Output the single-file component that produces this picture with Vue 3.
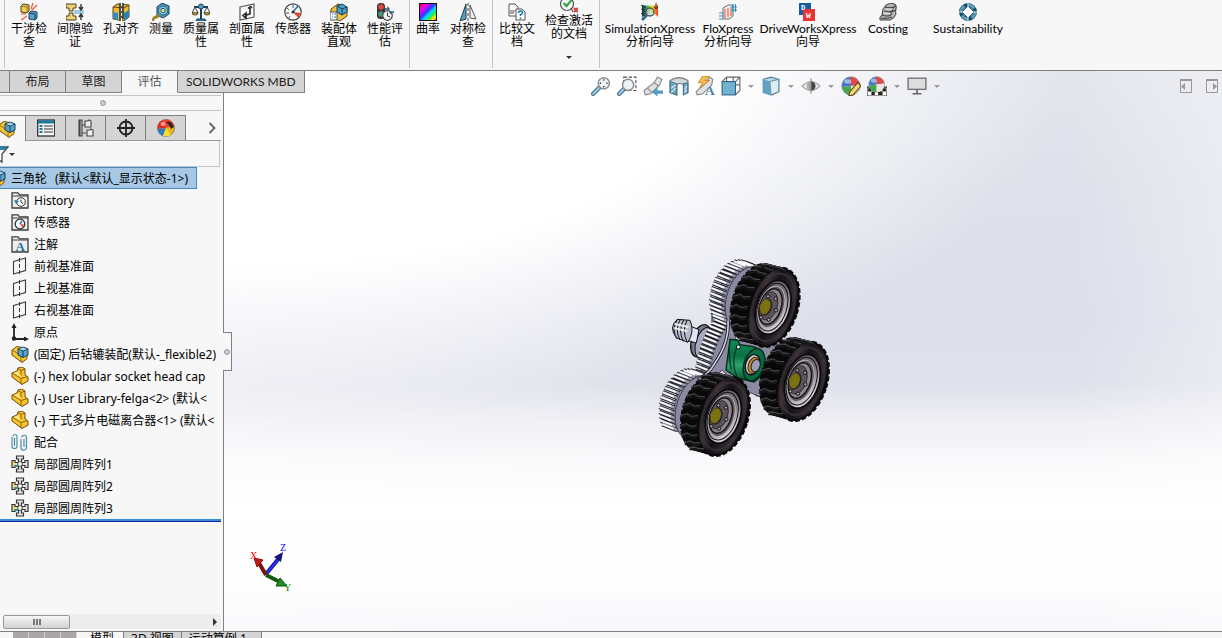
<script setup>
import { ref } from 'vue'

const folder = '<path d="M1 4V1.800h6l1.500 2H17V17H1z" fill="#eee" stroke="#3c3c3c" stroke-width="1.300"/><path d="M1 5h16" stroke="#3c3c3c"/>'
const part = '<path d="M1 6l5-2 1-3 4-1 3 2v6l3 2v4l-6 3.500L1 10z" fill="#fbc52c" stroke="#6b4b0c" stroke-width="1"/><path d="M1 6l9 5.500v5.500M10 11.500l7-2M7 1.500l3 2v5M10 3.500l4-1.500" fill="none" stroke="#7d5a10" stroke-width=".9"/><path d="M2.500 6l4.500-1.500 2.500 4L10 10z" fill="#ffe680"/>'
const assembly = '<path d="M1 5l5-3.500 10 2v10l-5 4L1 10z" fill="#fbc52c" stroke="#6b4b0c"/><path d="M2 5.500l8 5v6" fill="none" stroke="#8d6a18"/><path d="M7 4l5-2 5 2v6l-5 2.500L7 10z" fill="#5aa2cc" stroke="#173f59"/><path d="M7 4l5 2 5-2M12 6v6" fill="none" stroke="#173f59"/><path d="M8 4l4-1.500 4 1.500-4 1.500z" fill="#a8d5ec"/>'
const plane = '<path d="M2.500 4.500L14.500 1v12.500L2.500 17z" fill="none" stroke="#3c3c3c" stroke-width="1.100"/><path d="M8.500 1v16" stroke="#3c3c3c" stroke-dasharray="4 2"/>'
const pattern = '<g fill="#e4e4e4" stroke="#333" stroke-width="1.200"><path d="M5.500 1h7v3h-2v3h-3V4h-2zM5.500 17h7v-3h-2v-3h-3v3h-2zM17 5.500v7h-3v-2h-3v-3h3v-2z"/><path d="M1 5.500v7h3v-2h3v-3H4v-2z" fill="#f6dc7a"/></g><path d="M7.500 7.500h3v3h-3z" fill="#fff"/><path d="M3 10h4v2H4z" fill="#1c93bd"/>'
const ball = '<circle cx="9" cy="9" r="8.200" fill="#eee" stroke="#555" stroke-width=".6"/><path d="M9 9L8 1A8 8 0 0 0 1 10z" fill="#3f74cf"/><path d="M9 9L8 1a8 8 0 0 1 9 7z" fill="#dc4a4c"/><path d="M9 9l-8 1a8 8 0 0 0 8 7z" fill="#45a94b"/><path d="M9 9l8-1a8 8 0 0 1-8 9z" fill="#ece8dc"/><ellipse cx="6" cy="5" rx="3" ry="2" fill="#fff" opacity=".5"/>'
const lens = (x, y) => `<path d="M${x - 4} ${y + 4}L2 16" stroke="#46788f" stroke-width="4" stroke-linecap="round"/><path d="M${x - 4} ${y + 4}L2 16" stroke="#9cc8dd" stroke-width="2" stroke-linecap="round"/><circle cx="${x}" cy="${y}" r="5" fill="#edf2f4" stroke="#8a8f92" stroke-width="1.300"/>`

const icons = {
  interference: '<path d="M1 3l2-2 6 1v6l-2 2-6-1z" fill="#f3cf55" stroke="#473a13"/><path d="M1 3l6 1v6M7 4l2-2" fill="none" stroke="#8c722a"/><path d="M9 10l2-2 6 1v6l-2 2-6-1z" fill="#55a3c8" stroke="#173f59"/><path d="M9 10l6 1v6" fill="none" stroke="#173f59"/><path d="M11 6l2-6M12 7l5-5M1 11h5M1 17l6-4" stroke="#f05235" stroke-width="1.200"/>',
  clearance: '<path d="M0 1h10v4H7v3H3V5H0zM3 10h4v3h3v4H0v-4h3z" fill="#f0d273" stroke="#4b411f"/><path d="M8 8h10M8 10h10" stroke="#47a0bf"/><path d="M15 1v6M15 11v6M13 4l2 3 2-3M13 14l2-3 2 3" fill="none" stroke="#333" stroke-width="1.400"/>',
  hole: '<path d="M1 4l4-3 12 1v12l-5 4-11-2z" fill="#eebc32" stroke="#60440e"/><path d="M1 9l5 1v7l-5-1z" fill="#328eb9"/><path d="M12 10l5-3v7l-5 4z" fill="#2882ad"/><path d="M7 0h5v16l-5 2z" fill="#4d504d"/><path d="M9.500 0v18" stroke="#fff" stroke-dasharray="3 2"/><path d="M1 4l11 1 5-3" fill="none" stroke="#5c430e"/>',
  measure: '<path d="M5 4l5-4 7 3v8l-6 4-6-3z" fill="#4a9cc6" stroke="#173f59"/><circle cx="11" cy="7.500" r="4.500" fill="#8bc8e2" stroke="#25607f"/><circle cx="11" cy="7.500" r="2.200" fill="#eed96e" stroke="#25607f"/><path d="M7 13l-6 3v2M1 15l6-3" fill="none" stroke="#9e811e" stroke-width="2"/>',
  mass: '<path d="M9 1v15M2 4h14" stroke="#15405a" stroke-width="2"/><circle cx="9" cy="3.500" r="2.500" fill="#4fa3c8" stroke="#15405a"/><path d="M5 16h8l1 2H4z" fill="#3d89ac" stroke="#15405a"/><path d="M3 4L0 10h6zM15 4l-3 6h6z" fill="none" stroke="#3f4347"/><path d="M0 10h6a3 2 0 0 1-6 0zM12 10h6a3 2 0 0 1-6 0z" fill="#f2cf53" stroke="#5d4813"/>',
  section: '<path d="M2 4l14-3v13L2 17z" fill="#fafafa" stroke="#555" stroke-width="1.200"/><path d="M12 5v6l-5 1.500M10 5.500l2.500-2 1.500 1.500M8 10l-3 2.500L8 15z" fill="none" stroke="#222" stroke-width="1.600"/>',
  sensor: '<circle cx="9" cy="9" r="8.200" fill="#f7f7f7" stroke="#454545" stroke-width="1.200"/><path d="M9 9l5-6" stroke="#1b7fa6" stroke-width="1.600"/><path d="M9 9l7.500 1-2 5z" fill="#e4432d"/><path d="M9 2v3M3 5l2 2M2 10h3M5 15l1-2" stroke="#555"/><circle cx="9" cy="9" r="1.500" fill="#333"/>',
  visual: '<path d="M1 6l7-5 9 3v9l-7 5-9-4z" fill="#eabf3d" stroke="#614910"/><path d="M7 3l5-2 5 3v5l-5 3-5-3z" fill="#4e9dc4" stroke="#173f59"/><path d="M7 3l5 3 5-2M12 6v6" fill="none" stroke="#173f59"/><path d="M0 9h7v8H0z" fill="#f9f9f9" stroke="#555"/><path d="M2 11h1M4 11h2M2 14h1M4 14h2" stroke="#247caa"/>',
  performance: '<rect x="1" y="0" width="8" height="16" rx="3.500" fill="#373737"/><circle cx="5" cy="4" r="2.700" fill="#e94242"/><circle cx="5" cy="11" r="2.700" fill="#497"/><circle cx="11.500" cy="12.500" r="4.800" fill="#f2f2f2" stroke="#444" stroke-width="1.200"/><path d="M11.500 9.500v3.500l2.500 1" stroke="#333" fill="none"/><path d="M9 6h4l-1.500-2M18 9h-4l1.500 2" fill="none" stroke="#205f80" stroke-width="1.300"/>',
  curvature: '<rect width="18" height="18" fill="#111"/><rect x="1" y="1" width="16" height="16" fill="url(#rainbow)"/>',
  symmetry: '<path d="M7 1v15l-6 2z" fill="#589fc0" stroke="#223f4d"/><path d="M11 2v13l6 1z" fill="#eee" stroke="#555"/><path d="M9 0v18" stroke="#444" stroke-dasharray="3 2"/>',
  compare: '<path d="M1 1h6l3 3v9H1z" fill="#fafafa" stroke="#555"/><path d="M8 6h6l3 3v8H8z" fill="#fff" stroke="#555"/><path d="M2 8h5M2 10h4" stroke="#555"/><path d="M10.500 10q0-2 2-2t2 1.800q0 1.200-2 2v1.200M12.500 14.500v1.500" fill="none" stroke="#187aaa" stroke-width="1.600"/>',
  check: '<circle cx="7" cy="9" r="6.500" fill="#f7f7f7" stroke="#555" stroke-width="1.200"/><path d="M3.500 8l3 3 5-6" fill="none" stroke="#34a447" stroke-width="2.200"/><path d="M14 13l4 4M18 13l-4 4" fill="none" stroke="#db352d" stroke-width="1.800"/><path d="M11 13l2 4M13 3l4-2v4" stroke="#333" fill="none"/>',
  simulation: '<path d="M1 2q8 1 16 0v12q-4-5-8-4L1 14z" fill="url(#heat)"/><path d="M0 2l5 3M0 6l5 3M0 10l4 3M15 0v6M13 4l2 2 2-2" fill="none" stroke="#333"/><path d="M6 12l-5 5" stroke="#266a91" stroke-width="2.600"/><circle cx="9" cy="9" r="4" fill="#c5d8d6" fill-opacity=".7" stroke="#555" stroke-width="1.400"/>',
  flow: '<path d="M4 5l5-3h5v11l-4 3H4z" fill="#eee" stroke="#6b6b6b"/><path d="M6 6v9M9 5v9M12 4v9" stroke="#f47469" stroke-width="1.400"/><path d="M12 4h6M12 7h6M0 10h4M0 13h5M0 16h4M14 1v8M16.500 1v8" stroke="#2496c5" stroke-width="1.100"/>',
  driveworks: '<rect x="0" y="0" width="12" height="12" fill="#155ba5"/><rect x="4" y="6" width="12" height="12" fill="#ea3434"/><text x="2" y="7" font-family="Liberation Mono" font-size="7" font-weight="700" fill="#fff">D</text><text x="7" y="15" font-family="Liberation Mono" font-size="8" font-weight="700" fill="#fff">W</text>',
  costing: '<path d="M1 17q-1-3 2-5 0-7 4-10 4-3 9-1 2 2 1 5t0 5q-2 5-6 6z" fill="#b5b5b5" stroke="#444"/><path d="M3 12q5 2 9 0M5 8q6 2 12-1M6 4q6 2 11-1M2 15q5 1 11-1M12 12q1-7 4-9" fill="none" stroke="#444" stroke-width="1.200"/><path d="M5 10l6 .500M7 6h7" stroke="#eee"/>',
  sustain: '<circle cx="9" cy="9" r="7" fill="none" stroke="#154d68" stroke-width="4"/><circle cx="9" cy="9" r="7" fill="none" stroke="#5ba1bd" stroke-width="2.500" stroke-dasharray="7 4"/><path d="M9 3l6 6-6 6-6-6z" fill="#f7f7f7" stroke="#205d79"/><path d="M0 9h4M14 9h4M9 0v4M9 14v4" stroke="#e8eef1"/>',
  part, assembly, plane, pattern,
  history: folder + '<circle cx="10" cy="11" r="4.300" fill="#fff" stroke="#333"/><path d="M10 8.500v2.500l2 1.500" fill="none" stroke="#333"/><path d="M3 9l2 4 3-3" fill="#267a9f"/>',
  sensors: folder + '<circle cx="9" cy="11" r="4.800" fill="#fff" stroke="#333" stroke-width="1.300"/><path d="M9 11l2-3" stroke="#1978a1" stroke-width="1.500"/><path d="M9 11l4 .5-1.500 3z" fill="#e7442e"/>',
  notes: folder + '<text x="4.500" y="16" font-family="Liberation Serif" font-size="13" font-weight="700" fill="#24729a">A</text>',
  origin: '<path d="M3 4v12h11" fill="none" stroke="#222" stroke-width="1.800"/><path d="M3 0L.5 5h5zM18 16l-5-2.500v5z" fill="#222"/><circle cx="3" cy="15.500" r="2.200" fill="#222"/>',
  mates: '<g fill="none" stroke="#4b8cad" stroke-width="1.200"><path d="M1 4v9a2.500 2.500 0 0 0 5 0V3.500a2 2 0 0 0-4 0M3.500 5v8M10 6v8.500a2.500 2.500 0 0 0 5.500 0V4.500a2 2 0 0 0-4.500 0M13 6v8"/></g>',
  props: '<rect x=".7" y="1" width="17" height="16" fill="#f7f7f7" stroke="#333" stroke-width="1.300"/><path d="M1 3h16" stroke="#1b799d" stroke-width="3"/><path d="M2.500 7h3M2.500 10h3M2.500 13h3" stroke="#1b799d" stroke-width="2"/><path d="M7 7h9M7 10h9M7 13h9" stroke="#333"/>',
  config: '<path d="M3 1v16M2 1h3v16H2zM5 6h4M5 14h4" fill="none" stroke="#444" stroke-width="1.100"/><path d="M8 2h3l1-1 2 1v6H8zM10 11h3l1-1 2 1v6h-6z" fill="#eee" stroke="#444" stroke-width="1.100"/>',
  target: '<circle cx="9" cy="9" r="6.500" fill="none" stroke="#222" stroke-width="1.800"/><path d="M9 0v18M0 9h18" stroke="#222" stroke-width="1.800"/>',
  appearance: '<circle cx="9" cy="9" r="8.500" fill="#f2b21c" stroke="#555" stroke-width=".6"/><path d="M9 9L6 1A8.500 8.500 0 0 0 .7 10z" fill="#d93025"/><path d="M9 9L6 1q7-2 11 5z" fill="#e8403a"/><path d="M9 3q5-2 8 5l-3 2q-2-5-5-7z" fill="#3a2020"/><path d="M9 9L.7 10Q1 15 6 17z" fill="#2e79c8"/><path d="M9 9l-3 8q5 1 8-1z" fill="#f3de2d"/><ellipse cx="6" cy="5" rx="2.500" ry="2" fill="#fff" opacity=".5"/>',
  filter: '<path d="M0 2h17l-6 7v8l-3-2V9z" fill="#fff" stroke="#444" stroke-width="1.300"/><path d="M1 1.500h15L14 5H4z" fill="#2a7fa3"/>',
  zoomFit: lens(11.500, 6.500) + '<path d="M11.500 2.500l1 1.500h-2zM11.500 10.500l1-1.500h-2zM7.500 6.500L9 5.500v2zM15.500 6.500L14 5.500v2z" fill="#333"/>',
  zoomArea: '<rect x="6" y="1" width="11" height="12" fill="none" stroke="#555" stroke-dasharray="3 1.500"/>' + lens(10, 8),
  previous: '<path d="M1 13l9-7 3-5 4 2-2 5-8 8-5 1z" fill="#e0e1e2" stroke="#888"/><path d="M4 11l4 4M10 6l4 3" stroke="#888"/><path d="M18 13h-5v-3l-5 4.500 5 4V16h5z" fill="#4f9bc2"/>',
  cut: '<path d="M1 4q8-5 16 0v11l-4 1V8q-3-3-6 0v9l-6-2z" fill="#d5d8d9" stroke="#777"/><path d="M1 5l6 2v10l-6-2zM13 7l4-1v9l-4 2z" fill="#68a6c3" stroke="#46788f"/><path d="M2 11l4-3M2 15l4-4M14 12l2-3M14 15l2-3" stroke="#eef"/>',
  annotView: '<path d="M1 14l9-8 3-5 3 2-1 5-8 8-5 1z" fill="#e0e1e2" stroke="#888"/><path d="M7 0h6L9 4h4L4 11l3-5H3z" fill="#fbbd4e" stroke="#b87918" stroke-width=".7"/><text x="9" y="17" font-family="Liberation Serif" font-size="12" font-weight="700" fill="#3d7fa5">A</text>',
  orient: '<path d="M5 1h12v12l-4 4M5 1v4M17 1l-4 4M5 1L1 5M11 1v4M13 8h4" fill="none" stroke="#666"/><rect x="1" y="5" width="12" height="12" fill="#73b2d3" stroke="#2e6685"/>',
  display: '<path d="M2 3l7-2 7 2v11l-6 3-8-2z" fill="#b7dced" stroke="#55808f"/><path d="M2 3l6 2v12l-6-2z" fill="#5fa3c5"/><path d="M8 5l8-2v11l-7 3z" fill="#ddeef4" stroke="#6a93a5"/>',
  eye: '<path d="M1 9q8-8 16 0-8 8-16 0z" fill="#ececec" stroke="#aaa"/><circle cx="9" cy="9" r="4" fill="#aaa"/><path d="M9 5a4 4 0 0 1 0 8z" fill="#444"/><path d="M9 2v14" stroke="#888"/>',
  editLook: ball + '<path d="M8 14l7-8 3 3-7 8-4 1z" fill="#f4d774" stroke="#5c4a1a"/>',
  scene: '<path d="M0 10h18v8H0z" fill="#fff" stroke="#333"/><path d="M1 11h3v3H1zM14 11h3v3h-3zM4 14h3v3H4zM10 14h4v3h-4z" fill="#222"/><g transform="translate(1 0) scale(.85)">' + ball + '</g>',
  screen: '<rect x="1" y="2" width="16" height="10" fill="#ddd" stroke="#777" stroke-width="1.300"/><path d="M9 12v4M5 16h8" stroke="#666" stroke-width="1.500"/>'
}

const ribbon = [
  [
    ['interference', '干涉检查', 'w46'], ['clearance', '间隙验证', 'w46'], ['hole', '孔对齐', 'w46'], ['measure', '测量', 'w34'],
    ['mass', '质量属性', 'w46'], ['section', '剖面属性', 'w46'], ['sensor', '传感器', 'w46'], ['visual', '装配体直观', 'w46'], ['performance', '性能评估', 'w46']
  ],
  [['curvature', '曲率', 'w34'], ['symmetry', '对称检查', 'w46']],
  [['compare', '比较文档', 'w46'], ['check', '检查激活的文档', 'w58 raised']],
  [
    ['simulation', 'SimulationXpress 分析向导', 'w98'], ['flow', 'FloXpress 分析向导', 'w58'], ['driveworks', 'DriveWorksXpress 向导', 'w102'],
    ['costing', 'Costing', 'w58'], ['sustain', 'Sustainability', 'w102']
  ]
]
const tabs = ['布局', '草图', '评估', 'SOLIDWORKS MBD']
const activeTab = ref('评估')
const panelTabs = [['props', '属性'], ['config', '配置'], ['target', '尺寸'], ['appearance', '外观']]
const tree = [
  ['history', 'History'], ['sensors', '传感器'], ['notes', '注解'], ['plane', '前视基准面'], ['plane', '上视基准面'], ['plane', '右视基准面'],
  ['origin', '原点'], ['assembly', '(固定) 后轱辘装配(默认-_flexible2)'], ['part', '(-) hex lobular socket head cap'],
  ['part', '(-) User Library-felga<2> (默认<'], ['part', '(-) 干式多片电磁离合器<1> (默认<'], ['mates', '配合'],
  ['pattern', '局部圆周阵列1'], ['pattern', '局部圆周阵列2'], ['pattern', '局部圆周阵列3']
]
const hud = [['zoomFit'], ['zoomArea'], ['previous'], ['cut'], ['annotView'], ['orient', 1], ['display', 1], ['eye', 1], ['editLook'], ['scene', 1], ['screen', 1]]
const sheets = ['模型', '3D 视图', '运动算例 1']

const TILT = Math.PI / 10
function rim(a, rx, ry, dx, dy) {
  const x = rx * Math.cos(a)
  const y = ry * Math.sin(a)
  return [dx + x * Math.cos(TILT) - y * Math.sin(TILT), dy + x * Math.sin(TILT) + y * Math.cos(TILT)].map(v => Math.round(v))
}

// tyre lugs, relative to the centre of the wheel's front face
let lugs = ''
for (let i = 0; i < 12; i++) {
  const a = Math.PI * (0.56 + i * 0.085)
  lugs += `M${rim(a, 71, 120, -54, -15)}L${rim(a + 0.1, 72, 120, -34, -11)}L${rim(a + 0.06, 72, 119, -20, -7)}L${rim(a + 0.12, 70, 116, -4, -2)}`
}
const bolts = Array.from({ length: 6 }, (_, i) => rim(i * Math.PI / 3, 24, 38, -14, 2))
const wheels = [[369, 172], [457, 394], [220, 499]]

// belt teeth: short bars running across the width of each pulley
function pulleyTeeth(cx, cy) {
  let d = ''
  for (let i = 0; i < 19; i++) {
    const a = Math.PI * (0.68 + i * 0.05)
    const [x, y] = rim(a, 63, 98, cx, cy)
    d += `M${x} ${y}l44 17`
  }
  return d
}
function saddleTeeth() {
  let d = ''
  for (let i = 0; i <= 12; i++) {
    const t = i / 12
    const x = Math.round((1 - t) * (1 - t) * 194 + 2 * t * (1 - t) * 148 + t * t * 136)
    const y = Math.round((1 - t) * (1 - t) * 208 + 2 * t * (1 - t) * 264 + t * t * 362)
    d += `M${x} ${y}l42 17`
  }
  return d
}
const teeth = [saddleTeeth(), pulleyTeeth(246, 128), pulleyTeeth(95, 455)]
</script>

<template>
  <div class="app">
    <header class="ribbon">
      <div v-for="(group, g) in ribbon" :key="g" class="group">
        <button v-for="item in group" :key="item[0]" :class="['tool', item[2]]" type="button">
          <svg viewBox="0 0 18 18" aria-hidden="true">
            <defs v-if="item[0] === 'curvature'">
              <linearGradient id="rainbow" x2="1" y2="1"><stop stop-color="#f02" /><stop offset=".25" stop-color="#e0f" /><stop offset=".45" stop-color="#33f" /><stop offset=".6" stop-color="#0df" /><stop offset=".74" stop-color="#2e4" /><stop offset=".87" stop-color="#fe0" /><stop offset="1" stop-color="#f62" /></linearGradient>
            </defs>
            <defs v-if="item[0] === 'simulation'">
              <linearGradient id="heat"><stop stop-color="#224" /><stop offset=".3" stop-color="#2a6" /><stop offset=".6" stop-color="#ee2" /><stop offset="1" stop-color="#f31" /></linearGradient>
            </defs>
            <g v-html="icons[item[0]]" />
          </svg>
          <span>{{ item[1] }}</span>
          <i v-if="item[0] === 'check'" class="caret dark" />
        </button>
      </div>
    </header>

    <main class="main">
      <nav class="tabs">
        <button type="button" class="tab stub" aria-label="装配体" />
        <button v-for="t in tabs" :key="t" type="button" :class="['tab', { on: activeTab === t }]" @click="activeTab = t">{{ t }}</button>
      </nav>

      <aside class="panel">
        <div class="grip"><i class="dot" /></div>
        <div class="panel-tabs">
          <button type="button" class="ptab first" aria-label="特征树"><svg viewBox="0 0 18 18"><g v-html="icons.assembly" /></svg></button>
          <button v-for="p in panelTabs" :key="p[0]" type="button" class="ptab" :aria-label="p[1]"><svg viewBox="0 0 18 18"><g v-html="icons[p[0]]" /></svg></button>
          <button type="button" class="more" aria-label="更多"><svg viewBox="0 0 8 12"><path d="M1.500 1l5 5-5 5" fill="none" stroke="#666" stroke-width="1.800" /></svg></button>
        </div>
        <div class="filter">
          <button type="button" aria-label="过滤"><svg viewBox="0 0 18 18"><g v-html="icons.filter" /></svg><i class="caret dark" /></button>
        </div>
        <div class="root">
          <svg viewBox="0 0 18 18"><g v-html="icons.assembly" /></svg>
          <span>三角轮</span><span>(默认&lt;默认_显示状态-1&gt;)</span>
        </div>
        <ul class="tree">
          <li v-for="n in tree" :key="n[1]"><svg viewBox="0 0 18 18"><g v-html="icons[n[0]]" /></svg><span>{{ n[1] }}</span></li>
        </ul>
        <div class="scroll">
          <div class="thumb"><i /><i /><i /></div>
          <svg viewBox="0 0 4 8"><path d="M0 0l4 4-4 4z" fill="#333" /></svg>
        </div>
      </aside>

      <section class="view">
        <div class="handle"><i class="dot" /></div>
        <div class="hud">
          <template v-for="h in hud" :key="h[0]">
            <button type="button" :aria-label="h[0]"><svg viewBox="0 0 18 18"><g v-html="icons[h[0]]" /></svg></button>
            <i v-if="h[1]" class="caret" />
          </template>
        </div>
        <div class="corner">
          <svg viewBox="0 0 12 14"><path d="M.5 1h11v12.500H.5z" fill="none" stroke="#999" /><path d="M0 1h12" stroke="#999" stroke-width="2" /><path d="M5 4v7L1 7.500z" fill="#999" /></svg>
          <svg viewBox="0 0 12 14"><path d="M.5 1h11v12.500H.5z" fill="none" stroke="#999" /><path d="M0 1h12" stroke="#999" stroke-width="2" /><path d="M7 4v7l4-3.500z" fill="#999" /></svg>
        </div>

        <svg class="model" viewBox="0 0 570 645">
          <defs>
            <linearGradient id="rimFace" x1="0" y1="0" x2="1" y2="1"><stop stop-color="#5a545c" /><stop offset=".45" stop-color="#77727a" /><stop offset=".8" stop-color="#d8d2d6" /><stop offset="1" stop-color="#6a6368" /></linearGradient>
            <linearGradient id="wall" x1="0" y1="0" x2="1" y2="0"><stop stop-color="#0b090b" /><stop offset=".2" stop-color="#3b333a" /><stop offset=".45" stop-color="#151115" /><stop offset=".85" stop-color="#332c33" /><stop offset="1" stop-color="#080608" /></linearGradient>
            <linearGradient id="green" x1="0" y1="0" x2="0" y2="1"><stop stop-color="#0f8a55" /><stop offset=".4" stop-color="#0c7144" /><stop offset=".6" stop-color="#2aa56e" /><stop offset="1" stop-color="#064a2c" /></linearGradient>
          </defs>
          <path d="M285 400l40 38 25-10-20-50z" fill="#b9bad2" stroke="#111" stroke-width="4" />
          <path d="M290 408l30 26M350 290l40-24 20 12M360 276l30-10" stroke="#fff" stroke-width="7" />
          <path d="M290 412l30 26M355 294l40-24" stroke="#111" stroke-width="3" />

          <ellipse cx="152" cy="272" rx="27" ry="50" transform="rotate(18 152 272)" fill="#7b7b8e" stroke="#111" stroke-width="4" />
          <ellipse cx="162" cy="278" rx="24" ry="48" transform="rotate(18 162 278)" fill="#a9a9be" stroke="#111" stroke-width="3" />
          <path d="M105 222l42 17-8 40-42-12z" fill="#e2e3f5" stroke="#111" stroke-width="3" />
          <path d="M82 208l38 3q15 30-6 66l-34-13q-26-32 2-56z" fill="#b8b9ca" stroke="#111" stroke-width="3" />
          <path d="M82 208q-18 30-2 58M91 208q-18 30-1 62M101 210q-18 30-1 64M111 211q-16 30 0 65" fill="none" stroke="#17171c" stroke-width="3" />
          <path d="M74 222l42 9M72 234l40 10" stroke="#fff" stroke-width="6" opacity=".8" />

          <path d="M262 34Q300 30 325 52L250 210 258 270 350 285 395 268 420 290 330 440 280 420 215 360 120 480 84 546 62 530 80 430 150 370 190 220 200 120z" fill="#8b8aa3" stroke="#1b1b22" stroke-width="2" />
          <path d="M186 180v38l30 14 24-12-2-40z" fill="#a3a3ba" stroke="#17171c" stroke-width="3" />
          <g v-for="(d, i) in teeth" :key="i" fill="none">
            <path :d="d" stroke="#15151a" stroke-width="13" />
            <path :d="d" stroke="#9a9aac" stroke-width="8" />
            <path :d="d" :stroke-dasharray="i ? '36 14' : '38 10'" stroke="#fff" stroke-width="5" />
          </g>
          <ellipse cx="292" cy="146" rx="62" ry="100" transform="rotate(18 292 146)" fill="#8b8aa3" stroke="#26262e" stroke-width="2" />
          <ellipse cx="142" cy="473" rx="62" ry="100" transform="rotate(18 142 473)" fill="#8b8aa3" stroke="#26262e" stroke-width="2" />
          <path d="M234 212q4 66-40 128-16 30-50 50" fill="none" stroke="#17171c" stroke-width="10" />
          <path d="M234 212q4 66-40 128-16 30-50 50" fill="none" stroke="#d0d0e0" stroke-width="5" />

          <path d="M240 268l22 2 8 14 40 6q36 12 36 48t-34 58l-50-12-34-24z" fill="url(#green)" stroke="#022a18" stroke-width="4" />
          <path d="M240 268q-5 50 4 90M262 286q-22 50 0 98" fill="none" stroke="#033d24" stroke-width="4" />
          <ellipse cx="312" cy="344" rx="30" ry="50" transform="rotate(18 312 344)" fill="#0a6a41" stroke="#022a18" stroke-width="4" />
          <ellipse cx="308" cy="344" rx="21" ry="31" transform="rotate(18 308 344)" fill="#d8d8e0" stroke="#111" stroke-width="4" />
          <ellipse cx="311" cy="346" rx="16" ry="25" transform="rotate(18 311 346)" fill="#c28a2c" stroke="#3a2607" stroke-width="3" />
          <ellipse cx="317" cy="347" rx="13" ry="19" transform="rotate(18 317 347)" fill="#9c9cba" stroke="#222" stroke-width="3" />
          <circle cx="265" cy="291" r="6" fill="#cfe" stroke="#111" stroke-width="3" />

          <g v-for="(w, i) in wheels" :key="i" :transform="`translate(${w[0]} ${w[1]})`">
            <g fill="#090909" stroke="#090909" stroke-width="6" stroke-dasharray="14 7">
              <ellipse v-for="k in 5" :key="k" :cx="-61 + k * 11" :cy="-17 + k * 3" rx="71" ry="120" :transform="`rotate(18 ${-61 + k * 11} ${-17 + k * 3})`" />
              <ellipse rx="74" ry="123" transform="rotate(18)" />
            </g>
            <path :d="lugs" fill="none" stroke="#464648" stroke-width="4" />
            <path :d="lugs" fill="none" stroke="#161618" stroke-width="6" transform="translate(1 6)" />
            <g transform="rotate(18)">
              <ellipse rx="69" ry="117" fill="url(#wall)" />
              <ellipse rx="61" ry="104" fill="none" stroke="#3c343b" stroke-width="7" opacity=".7" />
              <ellipse rx="50" ry="83" fill="url(#rimFace)" stroke="#070507" stroke-width="5" />
              <ellipse cx="-2" rx="43" ry="74" fill="none" stroke="#151115" stroke-width="3" />
              <ellipse cx="-5" rx="37" ry="64" fill="#5e575e" stroke="#b5aeb2" stroke-width="3" />
              <ellipse cx="-8" rx="32" ry="55" fill="#8d868c" stroke="#141014" stroke-width="4" />
              <ellipse cx="-14" rx="26" ry="44" fill="#5a535a" stroke="#1a151a" stroke-width="2" />
            </g>
            <circle v-for="(b, n) in bolts" :key="n" :cx="b[0]" :cy="b[1]" r="5" fill="#a9a2a8" stroke="#111" stroke-width="3" />
            <ellipse cx="-21" cy="-1" rx="18" ry="27" transform="rotate(18 -21 -1)" fill="#2b2529" />
            <ellipse cx="-23" cy="-2" rx="15" ry="23" transform="rotate(18 -23 -2)" fill="#7b720f" />
          </g>
        </svg>

        <svg class="triad" viewBox="0 0 44 54">
          <path d="M18 33l14-17" stroke="#1212a8" stroke-width="4" /><path d="M18 33l14-17" stroke="#3838ec" stroke-width="1.500" /><path d="M35 11l-9 5 7 5z" fill="#13137c" />
          <path d="M18 34l-7-12" stroke="#7d1414" stroke-width="4" /><path d="M6 17l9 2-6 7z" fill="#c11818" stroke="#8b1010" />
          <path d="M18 34l14 7" stroke="#125c12" stroke-width="4" /><path d="M39 45l-11 0 4-8z" fill="#258a2b" stroke="#0c520f" />
          <g font-family="Liberation Serif" font-size="10"><text x="2" y="18" fill="#f00">X</text><text x="32" y="10" fill="#00f">Z</text><text x="36" y="50" fill="#080">Y</text></g>
        </svg>
      </section>
    </main>

    <footer class="sheets">
      <div class="pager"><button v-for="l in ['首页', '上一页', '下一页', '末页']" :key="l" type="button" :aria-label="l" /></div>
      <button v-for="(s, i) in sheets" :key="s" type="button" :class="['sheet', { on: i === 0, wide: i === 2 }]">{{ s }}</button>
    </footer>
  </div>
</template>

<style>
body { margin: 0; overflow: hidden; }
</style>

<style scoped>
.app { height: 100vh; display: flex; flex-direction: column; background: #f7f7f7; color: #000; font: 12px/13px "Noto Sans", "Noto Sans CJK SC", sans-serif; overflow: hidden; }
button { margin: 0; padding: 0; border: 0; background: none; color: inherit; font: inherit; }
svg { display: block; width: 18px; height: 18px; flex: none; }

.ribbon, .tabs { font-family: Lato, "Noto Sans CJK SC", sans-serif; }
.ribbon { height: 70px; flex: none; display: flex; padding-left: 4px; border-bottom: 1px solid #808080; }
.group { display: flex; height: 68px; border-left: 1px solid #c4c4c4; padding: 0 1px; box-sizing: border-box; }
.tool { display: flex; flex-direction: column; align-items: center; padding-top: 3px; box-sizing: border-box; text-align: center; }
.tool span { padding: 1px 4px 0; }
.raised { margin-top: -8px; }
.raised .caret { margin-top: 16px; }
.w34 { width: 34px; }
.w46 { width: 46px; }
.w58 { width: 58px; }
.w58 span { padding: 1px 0 0; }
.w98 { width: 98px; }
.w102 { width: 102px; }
.raised span { padding: 1px 4px 0; }
.caret { width: 0; height: 0; border: 3px solid transparent; border-top-color: #999; border-bottom: 0; }
.caret.dark { border-top-color: #333; }

.main { flex: 1; min-height: 0; display: flex; position: relative; border-bottom: 1px solid #808080; }
.tabs { position: absolute; top: 0; left: 0; z-index: 2; display: flex; height: 22px; }
.tab { padding: 0 8px; min-width: 56px; background: #d4d4d4; border: solid #808080; border-width: 0 1px 1px 0; color: #222; box-sizing: border-box; }
.tab.stub { min-width: 10px; padding: 0; }
.tab.on { background: #f7f7f7; border-bottom-color: #f7f7f7; color: #555; }

.panel { width: 223px; flex: none; display: flex; flex-direction: column; padding-top: 22px; border-right: 1px solid #808080; }
.grip { height: 14px; margin: 2px 2px 0 0; border: solid #c6c6c6; border-width: 1px 0; display: flex; align-items: center; justify-content: center; padding-right: 15px; }
.dot { width: 6px; height: 6px; border-radius: 50%; background: #ccc; border: 1px solid #999; box-sizing: border-box; }
.panel-tabs { display: flex; height: 26px; margin: 4px 2px 0 0; box-sizing: border-box; border-bottom: 1px solid #999; }
.ptab { width: 40px; background: #d4d4d4; border: solid #808080; border-width: 1px 1px 0 0; box-sizing: border-box; display: flex; align-items: center; justify-content: center; }
.ptab.first { width: 26px; background: #f7f7f7; justify-content: flex-start; margin-bottom: -1px; }
.ptab.first svg { margin-left: -2px; }
.more { margin-left: auto; width: 18px; display: flex; align-items: center; justify-content: center; }
.more svg { width: 8px; height: 12px; }
.filter { height: 26px; margin-right: 3px; border: solid #c6c6c6; border-width: 0 1px 1px 0; box-sizing: border-box; }
.filter button { display: flex; align-items: center; height: 26px; margin-left: -9px; }
.root { height: 22px; box-sizing: border-box; align-self: flex-start; display: flex; align-items: center; background: #a6c8e4; border: 1px solid #3f8ac4; border-left: 0; padding-right: 8px; white-space: nowrap; }
.root svg { margin-left: -12px; margin-right: 5px; }
.root span + span { margin-left: 8px; }
.tree { list-style: none; margin: 0 2px 0 0; padding: 0 0 0 11px; border-bottom: 2px solid #2f8fd0; box-shadow: 0 1px #1b1ba8; }
.tree li { height: 22px; display: flex; align-items: center; gap: 5px; white-space: nowrap; }
.scroll { margin: auto 2px 2px 3px; height: 15px; display: flex; align-items: center; justify-content: space-between; background: #ededed; padding-right: 4px; }
.scroll svg { width: 4px; height: 8px; }
.thumb { width: 67px; height: 14px; box-sizing: border-box; border: 1px solid #999; border-radius: 2px; background: linear-gradient(#f6f6f6, #d2d2d6); display: flex; align-items: center; justify-content: center; gap: 1px; }
.thumb i { width: 2px; height: 6px; background: #777; }

.view { flex: 1; min-width: 0; position: relative;
  background:
    radial-gradient(ellipse 80% 62% at 4% 0, #fff 55%, rgba(255, 255, 255, .5) 78%, rgba(255, 255, 255, 0) 100%),
    linear-gradient(90deg, rgba(255, 255, 255, .35), rgba(255, 255, 255, 0) 45%, rgba(255, 255, 255, 0) 85%, rgba(255, 255, 255, .35)),
    linear-gradient(#e4e6ee, #dee1ea 20%, #dcdeea 45%, #dfe1eb 56%, #f0f0f5 63%, #fafafc 70%, #fff 78%, #fdfdfe 92%, #f6f7fa); }
.handle { position: absolute; left: -1px; top: 261px; width: 9px; height: 39px; box-sizing: border-box; border: 1px solid #808080; border-left: 0; background: #f7f7f7; display: flex; align-items: center; justify-content: center; }
.hud { display: flex; align-items: center; height: 30px; padding-left: 36.5%; }
.hud button { width: 26px; display: flex; justify-content: center; }
.hud svg { width: 20px; height: 20px; }
.hud .caret { margin: 0 4px; }
.corner { position: absolute; right: 4px; top: 8px; display: flex; gap: 14px; }
.corner svg { width: 12px; height: 14px; }
.model { position: absolute; left: 426px; top: 179px; width: 190px; height: 215px; }
.triad { position: absolute; left: 24px; bottom: 36px; width: 44px; height: 54px; }

.sheets { height: 6px; flex: none; display: flex; overflow: hidden; line-height: 12px; padding-left: 13px; }
.pager { display: flex; width: 64px; margin-right: 1px; background: #aaa6aa; }
.pager button { flex: 1; border-right: 1px solid #d0d0d0; }
.sheet { height: 14px; padding: 0 7px; background: #d4d4d4; border-right: 1px solid #808080; white-space: nowrap; text-align: left; }
.sheet.on { background: #f7f7f7; padding: 0 9px 0 12px; }
.sheet.wide { min-width: 80px; }
</style>
